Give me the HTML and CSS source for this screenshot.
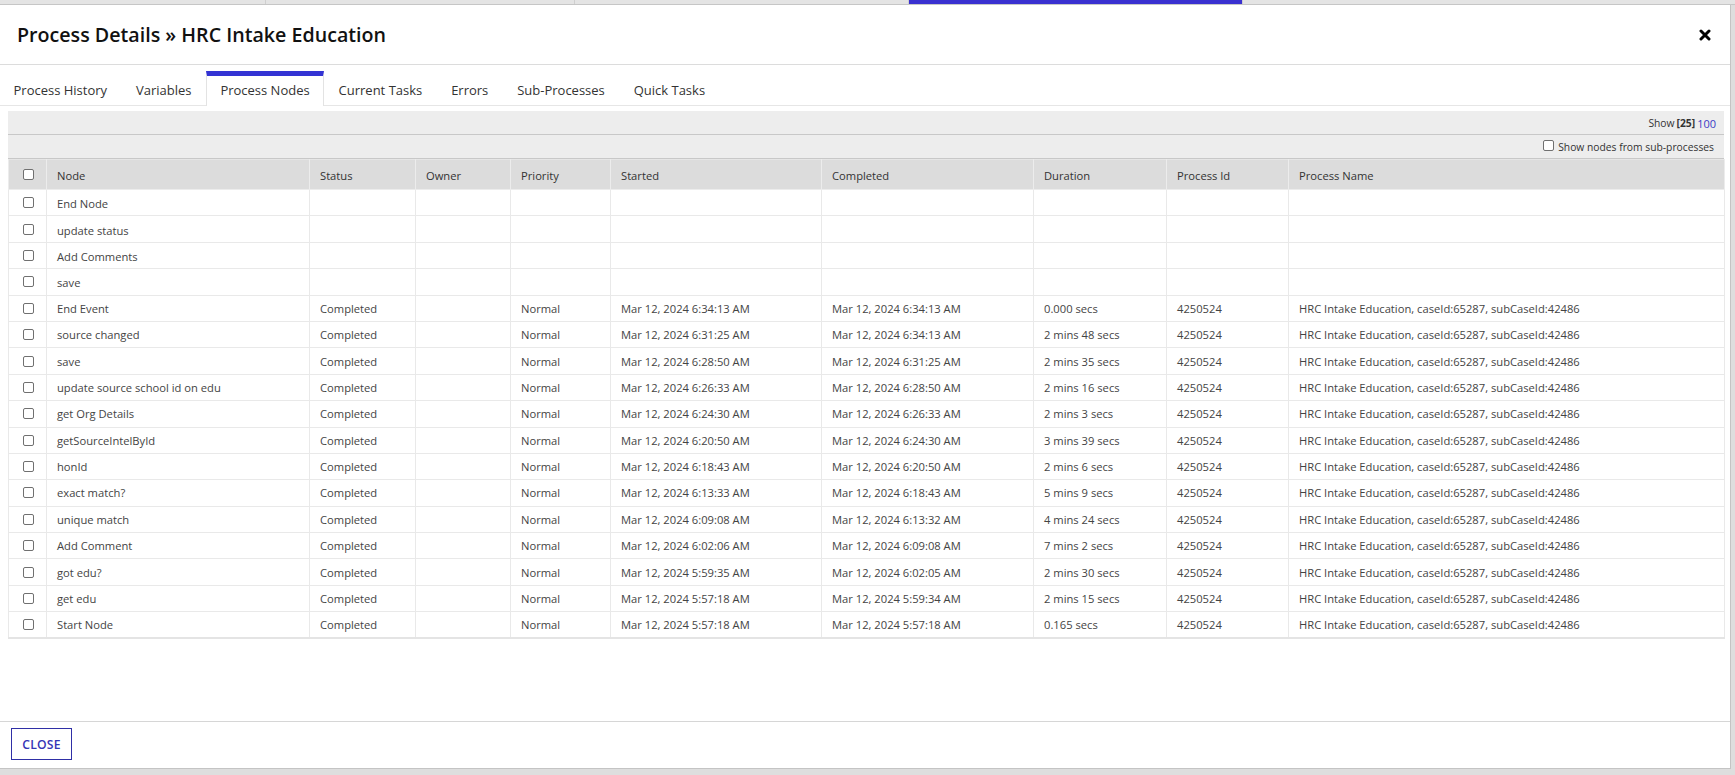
FILE: index.html
```html
<!DOCTYPE html>
<html lang="en">
<head>
<meta charset="utf-8">
<title>Process Details</title>
<link rel="stylesheet" href="styles.css">
</head>
<body>
<div class="page-tabs">
  <div class="ptab w1"></div>
  <div class="ptab w2"></div>
  <div class="ptab w3"></div>
  <div class="ptab w4 active"></div>
  <div class="ptab w5"></div>
</div>
<div class="stage">
  <div class="modal">
    <div class="modal-header">
      <h1 class="modal-title">Process Details » HRC Intake Education</h1>
      <button class="close-x" aria-label="Close">
        <svg width="12" height="12" viewBox="0 0 12 12"><path d="M2 2 L10 10 M10 2 L2 10" stroke="#000" stroke-width="3" stroke-linecap="round"/></svg>
      </button>
    </div>
    <div class="tabs">
      <div class="tab">Process History</div>
      <div class="tab">Variables</div>
      <div class="tab active">Process Nodes</div>
      <div class="tab">Current Tasks</div>
      <div class="tab">Errors</div>
      <div class="tab">Sub-Processes</div>
      <div class="tab">Quick Tasks</div>
    </div>
    <div class="modal-body">
      <div class="grid">
        <div class="toolbar t1">Show <b>[25]</b> <span class="link">100</span></div>
        <div class="toolbar t2"><label class="sub"><input type="checkbox" class="cb"> Show nodes from sub-processes</label></div>
        <table class="nodes">
          <colgroup>
            <col class="c-cb"><col class="c-node"><col class="c-status"><col class="c-owner"><col class="c-prio"><col class="c-start"><col class="c-comp"><col class="c-dur"><col class="c-pid"><col class="c-pname">
          </colgroup>
          <thead>
            <tr><th class="cbcell"><input type="checkbox" class="cb"></th><th>Node</th><th>Status</th><th>Owner</th><th>Priority</th><th>Started</th><th>Completed</th><th>Duration</th><th>Process Id</th><th>Process Name</th></tr>
          </thead>
          <tbody>
            <tr class="empty"><td class="cbcell"><input type="checkbox" class="cb"></td><td>End Node</td><td></td><td></td><td></td><td></td><td></td><td></td><td></td><td></td></tr>
            <tr class="empty"><td class="cbcell"><input type="checkbox" class="cb"></td><td>update status</td><td></td><td></td><td></td><td></td><td></td><td></td><td></td><td></td></tr>
            <tr class="empty"><td class="cbcell"><input type="checkbox" class="cb"></td><td>Add Comments</td><td></td><td></td><td></td><td></td><td></td><td></td><td></td><td></td></tr>
            <tr class="empty"><td class="cbcell"><input type="checkbox" class="cb"></td><td>save</td><td></td><td></td><td></td><td></td><td></td><td></td><td></td><td></td></tr>
            <tr><td class="cbcell"><input type="checkbox" class="cb"></td><td>End Event</td><td>Completed</td><td></td><td>Normal</td><td>Mar 12, 2024 6:34:13 AM</td><td>Mar 12, 2024 6:34:13 AM</td><td>0.000 secs</td><td>4250524</td><td>HRC Intake Education, caseId:65287, subCaseId:42486</td></tr>
            <tr><td class="cbcell"><input type="checkbox" class="cb"></td><td>source changed</td><td>Completed</td><td></td><td>Normal</td><td>Mar 12, 2024 6:31:25 AM</td><td>Mar 12, 2024 6:34:13 AM</td><td>2 mins 48 secs</td><td>4250524</td><td>HRC Intake Education, caseId:65287, subCaseId:42486</td></tr>
            <tr><td class="cbcell"><input type="checkbox" class="cb"></td><td>save</td><td>Completed</td><td></td><td>Normal</td><td>Mar 12, 2024 6:28:50 AM</td><td>Mar 12, 2024 6:31:25 AM</td><td>2 mins 35 secs</td><td>4250524</td><td>HRC Intake Education, caseId:65287, subCaseId:42486</td></tr>
            <tr><td class="cbcell"><input type="checkbox" class="cb"></td><td>update source school id on edu</td><td>Completed</td><td></td><td>Normal</td><td>Mar 12, 2024 6:26:33 AM</td><td>Mar 12, 2024 6:28:50 AM</td><td>2 mins 16 secs</td><td>4250524</td><td>HRC Intake Education, caseId:65287, subCaseId:42486</td></tr>
            <tr><td class="cbcell"><input type="checkbox" class="cb"></td><td>get Org Details</td><td>Completed</td><td></td><td>Normal</td><td>Mar 12, 2024 6:24:30 AM</td><td>Mar 12, 2024 6:26:33 AM</td><td>2 mins 3 secs</td><td>4250524</td><td>HRC Intake Education, caseId:65287, subCaseId:42486</td></tr>
            <tr><td class="cbcell"><input type="checkbox" class="cb"></td><td>getSourceIntelById</td><td>Completed</td><td></td><td>Normal</td><td>Mar 12, 2024 6:20:50 AM</td><td>Mar 12, 2024 6:24:30 AM</td><td>3 mins 39 secs</td><td>4250524</td><td>HRC Intake Education, caseId:65287, subCaseId:42486</td></tr>
            <tr><td class="cbcell"><input type="checkbox" class="cb"></td><td>honId</td><td>Completed</td><td></td><td>Normal</td><td>Mar 12, 2024 6:18:43 AM</td><td>Mar 12, 2024 6:20:50 AM</td><td>2 mins 6 secs</td><td>4250524</td><td>HRC Intake Education, caseId:65287, subCaseId:42486</td></tr>
            <tr><td class="cbcell"><input type="checkbox" class="cb"></td><td>exact match?</td><td>Completed</td><td></td><td>Normal</td><td>Mar 12, 2024 6:13:33 AM</td><td>Mar 12, 2024 6:18:43 AM</td><td>5 mins 9 secs</td><td>4250524</td><td>HRC Intake Education, caseId:65287, subCaseId:42486</td></tr>
            <tr><td class="cbcell"><input type="checkbox" class="cb"></td><td>unique match</td><td>Completed</td><td></td><td>Normal</td><td>Mar 12, 2024 6:09:08 AM</td><td>Mar 12, 2024 6:13:32 AM</td><td>4 mins 24 secs</td><td>4250524</td><td>HRC Intake Education, caseId:65287, subCaseId:42486</td></tr>
            <tr><td class="cbcell"><input type="checkbox" class="cb"></td><td>Add Comment</td><td>Completed</td><td></td><td>Normal</td><td>Mar 12, 2024 6:02:06 AM</td><td>Mar 12, 2024 6:09:08 AM</td><td>7 mins 2 secs</td><td>4250524</td><td>HRC Intake Education, caseId:65287, subCaseId:42486</td></tr>
            <tr><td class="cbcell"><input type="checkbox" class="cb"></td><td>got edu?</td><td>Completed</td><td></td><td>Normal</td><td>Mar 12, 2024 5:59:35 AM</td><td>Mar 12, 2024 6:02:05 AM</td><td>2 mins 30 secs</td><td>4250524</td><td>HRC Intake Education, caseId:65287, subCaseId:42486</td></tr>
            <tr><td class="cbcell"><input type="checkbox" class="cb"></td><td>get edu</td><td>Completed</td><td></td><td>Normal</td><td>Mar 12, 2024 5:57:18 AM</td><td>Mar 12, 2024 5:59:34 AM</td><td>2 mins 15 secs</td><td>4250524</td><td>HRC Intake Education, caseId:65287, subCaseId:42486</td></tr>
            <tr><td class="cbcell"><input type="checkbox" class="cb"></td><td>Start Node</td><td>Completed</td><td></td><td>Normal</td><td>Mar 12, 2024 5:57:18 AM</td><td>Mar 12, 2024 5:57:18 AM</td><td>0.165 secs</td><td>4250524</td><td>HRC Intake Education, caseId:65287, subCaseId:42486</td></tr>
          </tbody>
        </table>
      </div>
    </div>
    <div class="modal-footer">
      <button class="btn-close">CLOSE</button>
    </div>
  </div>
</div>
</body>
</html>
```
FILE: styles.css
```css
* { box-sizing: border-box; }
html, body { margin: 0; padding: 0; }
body {
  width: 1735px;
  height: 775px;
  overflow: hidden;
  background: #dedede;
  font-family: "Open Sans", "Noto Sans", sans-serif;
  color: #333;
}

.page-tabs {
  display: flex;
  height: 5px;
  background: #e4e4e4;
  border-bottom: 1px solid #c6c6c6;
}
.ptab { height: 4px; border-right: 1px solid #cfcfcf; }
.ptab.w1 { width: 266px; }
.ptab.w2 { width: 309px; }
.ptab.w3 { width: 334px; }
.ptab.w4 { width: 334px; }
.ptab.w5 { flex: 1; border-right: none; }
.ptab.active { background: #3a31d0; }

.stage { display: flex; }
.modal {
  width: 1731px;
  height: 764px;
  background: #fff;
  border-right: 1px solid #c4c4c4;
  border-bottom: 1px solid #c4c4c4;
  display: flex;
  flex-direction: column;
}

.modal-header {
  height: 60px;
  flex: none;
  border-bottom: 1px solid #dcdcdc;
  display: flex;
  align-items: center;
  justify-content: space-between;
  padding: 0 19px 0 17px;
}
.modal-title {
  margin: 0;
  font-size: 19.65px;
  font-weight: 600;
  color: #111;
}
.close-x {
  border: none;
  background: none;
  padding: 0;
  width: 12px;
  height: 12px;
  display: flex;
}

.tabs {
  flex: none;
  display: flex;
  align-items: flex-end;
  height: 41px;
  border-bottom: 1px solid #e6e6e6;
}
.tab {
  height: 35px;
  margin-bottom: -1px;
  padding: 0 13.45px 2px;
  border-top: 5px solid transparent;
  border-left: 1px solid transparent;
  border-right: 1px solid transparent;
  font-size: 13px;
  color: #333;
  display: flex;
  align-items: center;
}
.tab:first-child { padding-left: 12.5px; }
.tab.active {
  border-top-color: #3333d4;
  border-left-color: #e3e3e3;
  border-right-color: #e3e3e3;
  background: #fff;
}

.modal-body {
  flex: 1;
  padding: 5px 6px 0 8px;
}
.grid { width: 1716px; }

.toolbar {
  background: #ededed;
  height: 24px;
  border-bottom: 1px solid #c8c8c8;
  display: flex;
  align-items: center;
  justify-content: flex-end;
  font-size: 10.3px;
  color: #333;
}
.toolbar.t1 { padding-right: 8px; padding-top: 1px; }
.toolbar.t1 b { font-weight: 700; margin: 0 2px; }
.toolbar.t2 { padding-right: 10px; }
.link { color: #3b3bc6; font-size: 11px; }
.sub { display: flex; align-items: center; gap: 4px; }

.cb {
  appearance: none;
  -webkit-appearance: none;
  width: 11px;
  height: 11px;
  margin: 0;
  border: 1px solid #707070;
  border-radius: 2px;
  background: #fff;
  display: block;
}
.sub .cb { margin-bottom: 2px; }

.nodes {
  width: 100%;
  table-layout: fixed;
  border-collapse: collapse;
  border: 1px solid #e6e6e6;
  border-bottom: 2px solid #e4e4e4;
  font-size: 11.2px;
}
.c-cb { width: 38px; }
.c-node { width: 263px; }
.c-status { width: 106px; }
.c-owner { width: 95px; }
.c-prio { width: 100px; }
.c-start { width: 211px; }
.c-comp { width: 212px; }
.c-dur { width: 133px; }
.c-pid { width: 122px; }
.c-pname { width: 436px; }

.nodes th {
  background: #dcdcdc;
  height: 30px;
  text-align: left;
  font-weight: normal;
  color: #333;
  padding: 1px 10px 0;
  border: 1px solid #ececec;
  border-top: none;
}
.nodes td {
  height: 26.4px;
  padding: 0 10px;
  color: #444;
  border: 1px solid #e9e9e9;
  white-space: nowrap;
  overflow: hidden;
}
.nodes tr.empty td { padding-top: 2px; }
.nodes .cbcell { padding: 0 0 0 14px; }
.nodes tr.empty td.cbcell { padding-top: 0; }

.modal-footer {
  flex: none;
  height: 47px;
  border-top: 1px solid #d6d6d6;
  padding: 6px 0 0 11px;
}
.btn-close {
  width: 61px;
  height: 32px;
  background: #fff;
  border: 1px solid #2f2fa6;
  color: #3535b6;
  font-family: "Open Sans", "Noto Sans", sans-serif;
  font-weight: 600;
  font-size: 12.2px;
  padding: 0;
  letter-spacing: 0.2px;
}
```
